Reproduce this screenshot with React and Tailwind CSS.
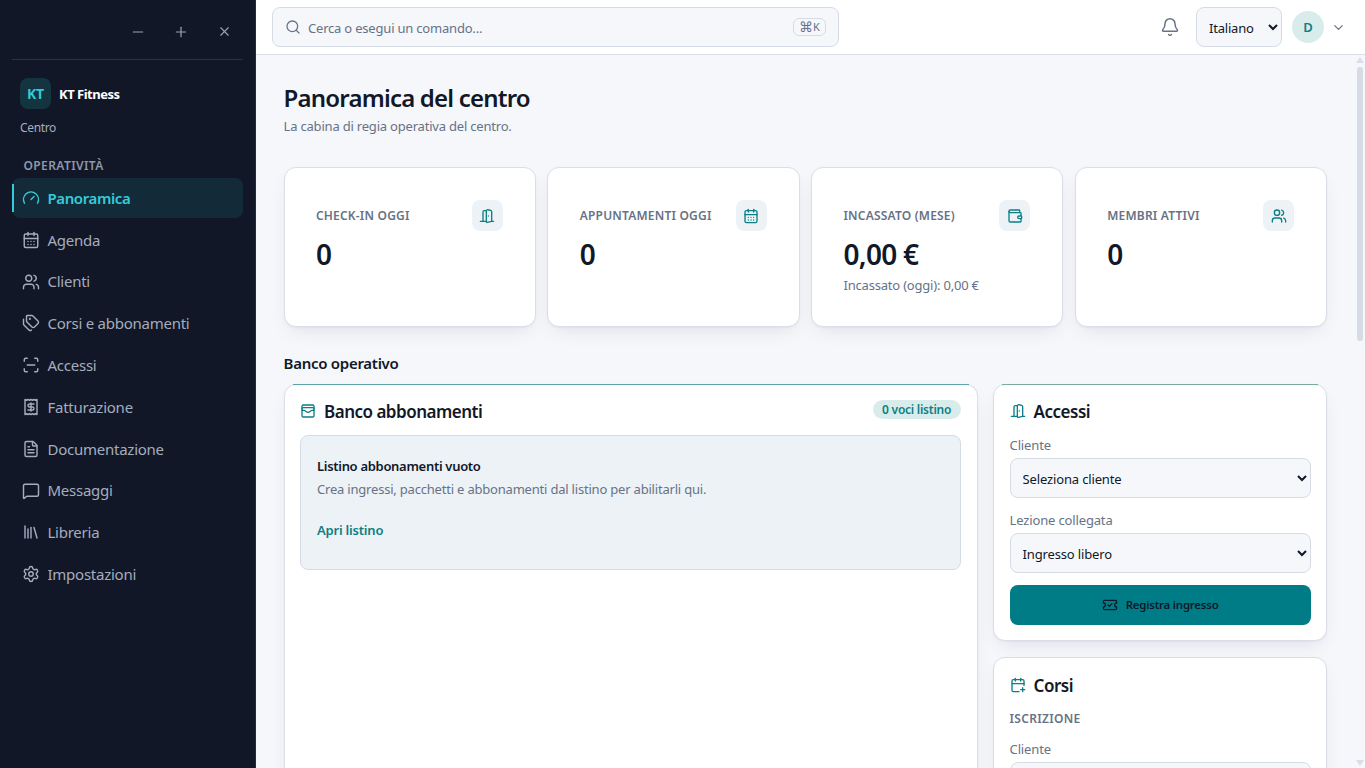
import React, { useState } from 'react';
import {
  Bell,
  CalendarDays,
  CalendarPlus,
  ChevronDown,
  DoorOpen,
  FileText,
  Gauge,
  Library,
  MessageSquare,
  Minus,
  Plus,
  Receipt,
  ScanLine,
  Search,
  Settings,
  Tags,
  TicketCheck,
  Users,
  Wallet,
  WalletCards,
  X
} from 'lucide-react';

const navItems = [
  { key: 'panoramica', label: 'Panoramica', icon: Gauge },
  { key: 'agenda', label: 'Agenda', icon: CalendarDays },
  { key: 'clienti', label: 'Clienti', icon: Users },
  { key: 'corsi', label: 'Corsi e abbonamenti', icon: Tags },
  { key: 'accessi', label: 'Accessi', icon: ScanLine },
  { key: 'fatturazione', label: 'Fatturazione', icon: Receipt },
  { key: 'documentazione', label: 'Documentazione', icon: FileText },
  { key: 'messaggi', label: 'Messaggi', icon: MessageSquare },
  { key: 'libreria', label: 'Libreria', icon: Library },
  { key: 'impostazioni', label: 'Impostazioni', icon: Settings }
];

const stats = [
  { label: 'CHECK-IN OGGI', value: '0', icon: DoorOpen },
  { label: 'APPUNTAMENTI OGGI', value: '0', icon: CalendarDays },
  { label: 'INCASSATO (MESE)', value: '0,00 €', hint: 'Incassato (oggi): 0,00 €', icon: Wallet },
  { label: 'MEMBRI ATTIVI', value: '0', icon: Users }
];

const cardClass = 'bg-white border border-[#d9deea] rounded-xl shadow-[0_1px_2px_rgba(15,23,42,0.04),0_8px_20px_-6px_rgba(15,23,42,0.10)]';

const Sidebar = () => {
  const [active, setActive] = useState('panoramica');

  return (
    <aside className="w-64 shrink-0 h-full bg-[#111727] border-r border-[#252b3b] px-3 text-[#a5adbd]">
      <div className="h-[60px] flex items-center justify-end gap-[27.5px] pr-[11px] pt-1 border-b border-[#2b3242] text-[#9aa3b4]">
        <Minus size={16} strokeWidth={1.8} />
        <Plus size={16} strokeWidth={1.8} className="-ml-px mr-px" />
        <X size={15} strokeWidth={1.8} />
      </div>
      <div className="flex items-center gap-2 mt-[18px] ml-2">
        <div className="w-[31px] h-[31px] rounded-lg bg-[#14343f] text-[#35cbd8] text-[14px] font-bold tracking-[-0.3px] flex items-center justify-center">KT</div>
        <span className="mt-[2px] text-[13px] font-bold text-white tracking-[-0.5px]">KT Fitness</span>
      </div>
      <div className="ml-2 mt-[10px] text-[12px] leading-[18px] tracking-[-0.35px]">Centro</div>
      <div className="ml-[11.5px] mt-5 text-[12px] leading-[18px] font-semibold tracking-[0.4px] text-[#8f98aa]">OPERATIVITÀ</div>
      <nav className="mt-[3px] flex flex-col gap-[1.8px]">
        {navItems.map((item) => {
          const Icon = item.icon;
          const isActive = active === item.key;
          return (
            <button
              key={item.key}
              onClick={() => setActive(item.key)}
              className={`relative w-[231px] h-10 flex items-center gap-[7.5px] px-[10px] rounded-lg text-[15px] ${
                isActive ? 'bg-[#132b39] text-[#35cbd8] font-semibold tracking-[-0.4px]' : 'tracking-[-0.25px]'
              }`}
            >
              {isActive && <span className="absolute left-0 top-[6px] w-[2px] h-7 bg-[#35cbd8]" />}
              <Icon size={18} strokeWidth={1.9} />
              {item.label}
            </button>
          );
        })}
      </nav>
    </aside>
  );
};

const Header = () => (
  <header className="h-[55px] shrink-0 bg-white border-b border-[#d9deea] flex items-center px-4">
    <div className="w-[567px] h-10 flex items-center bg-[#f5f7fb] border border-[#d5dce6] rounded-lg px-3 text-[#677286]">
      <Search size={16} strokeWidth={1.9} />
      <span className="ml-[7px] mt-[3px] text-[13px] tracking-[-0.2px]">Cerca o esegui un comando...</span>
      <kbd className="ml-auto w-[33px] h-[18px] border border-[#d5dce6] rounded-md font-['Noto_Sans','DejaVu_Sans',sans-serif] text-[11px] flex items-center justify-center">
        <span className="text-[14px] leading-none">⌘</span>K
      </kbd>
    </div>
    <div className="ml-auto flex items-center text-[#677286]">
      <Bell size={20} strokeWidth={1.75} />
      <select className="ml-4 w-[86px] h-10 bg-[#f5f7fb] border border-[#d5dce6] rounded-lg pl-2 pt-[2px] text-[13px] tracking-[-0.2px] text-[#111827]">
        <option>Italiano</option>
      </select>
      <div className="ml-[10px] w-8 h-8 pt-[2px] rounded-full bg-[#d9ecec] text-[#0b7f84] text-[13px] font-semibold flex items-center justify-center">D</div>
      <ChevronDown size={15} strokeWidth={2} className="ml-[7px] mr-[3px]" />
    </div>
  </header>
);

const StatCard = ({ stat }) => {
  const Icon = stat.icon;
  return (
    <div className={`h-40 pl-[31.4px] pr-8 pt-8 ${cardClass}`}>
      <div className="flex items-center justify-between">
        <span className="text-[12px] font-semibold tracking-[0.2px] text-[#677286]">{stat.label}</span>
        <span className="w-[31px] h-[31px] rounded-lg bg-[#edf2f7] text-[#0b7f84] flex items-center justify-center">
          <Icon size={16} strokeWidth={2} />
        </span>
      </div>
      <div className="mt-1 mb-[2px] text-[28px] leading-[38px] font-semibold tracking-[-0.7px] text-[#111827]">{stat.value}</div>
      {stat.hint && <div className="text-[13px] leading-5 tracking-[-0.2px] text-[#677286]">{stat.hint}</div>}
    </div>
  );
};

const Field = ({ label, value }) => (
  <label className="block">
    <span className="block text-[13px] leading-5 tracking-[-0.15px] text-[#677286]">{label}</span>
    <select className="mt-[3px] w-full h-10 bg-[#f5f7fb] border border-[#d5dce6] rounded-lg pl-2 pt-[2px] text-[13px] tracking-[-0.15px] text-[#111827]">
      <option>{value}</option>
    </select>
  </label>
);

const PanelTitle = ({ icon: Icon, children }) => (
  <h3 className="flex items-center gap-2 text-[17px] leading-6 font-semibold tracking-[-0.5px] text-[#111827]">
    <Icon size={16} strokeWidth={2} className="-mt-[2px] text-[#0b7f84]" />
    {children}
  </h3>
);

const App = () => {
  return (
    <div className="h-screen flex overflow-hidden bg-[#f5f7fb] font-['Noto_Sans',sans-serif]">
      <Sidebar />
      <div className="flex-1 min-w-0 flex flex-col">
        <Header />
        <div className="flex-1 min-h-0 flex overflow-hidden">
          <main className="w-[1099px] shrink-0 pl-[27.6px] pr-7 pt-[26px] overflow-hidden">
            <h1 className="text-[24px] leading-[34px] font-semibold tracking-[-0.8px] text-[#111827]">Panoramica del centro</h1>
            <p className="mt-px text-[13px] leading-5 tracking-[-0.2px] text-[#677286]">La cabina di regia operativa del centro.</p>

            <div className="mt-[31px] grid grid-cols-4 gap-[11.6px]">
              {stats.map((stat) => (
                <StatCard key={stat.label} stat={stat} />
              ))}
            </div>

            <h2 className="mt-6 text-[15px] leading-6 font-semibold tracking-[-0.28px] text-[#111827]">Banco operativo</h2>

            <div className="mt-[9px] flex items-start gap-[15px]">
              <section className={`relative w-[694px] h-[460px] pl-[15.4px] pr-4 pt-[15px] ${cardClass}`}>
                <span className="absolute inset-x-2 -top-px h-px bg-[#5fa5aa]" />
                <div className="flex items-start justify-between">
                  <PanelTitle icon={WalletCards}>Banco abbonamenti</PanelTitle>
                  <span className="w-[88px] h-[19px] rounded-full bg-[#d9ecec] text-[#0b7f84] text-[12px] font-semibold tracking-[-0.25px] flex items-center justify-center">0 voci listino</span>
                </div>
                <div className="mt-[11px] h-[135px] rounded-lg border border-[#d5dce6] bg-[#edf2f7] px-4 pt-5">
                  <div className="text-[13px] leading-5 font-semibold tracking-[-0.3px] text-[#111827]">Listino abbonamenti vuoto</div>
                  <div className="mt-[3px] text-[13px] leading-5 tracking-[-0.2px] text-[#677286]">Crea ingressi, pacchetti e abbonamenti dal listino per abilitarli qui.</div>
                  <button className="mt-[21px] text-[13px] leading-5 font-semibold tracking-[-0.2px] text-[#0b7f84]">Apri listino</button>
                </div>
              </section>

              <div className="w-[334px] shrink-0 flex flex-col gap-4">
                <section className={`relative h-[257px] pl-4 pr-[15px] pt-[15px] ${cardClass}`}>
                  <span className="absolute inset-x-2 -top-px h-px bg-[#7aab9f]" />
                  <PanelTitle icon={DoorOpen}>Accessi</PanelTitle>
                  <div className="mt-[11px] flex flex-col gap-3">
                    <Field label="Cliente" value="Seleziona cliente" />
                    <Field label="Lezione collegata" value="Ingresso libero" />
                    <button className="h-10 rounded-lg bg-[#007c87] text-[#111827] text-[11.5px] font-semibold tracking-[-0.25px] flex items-center justify-center gap-2">
                      <TicketCheck size={16} strokeWidth={1.9} />
                      Registra ingresso
                    </button>
                  </div>
                </section>
                <section className={`h-[257px] pl-4 pr-[15px] pt-4 ${cardClass}`}>
                  <PanelTitle icon={CalendarPlus}>Corsi</PanelTitle>
                  <div className="mt-3 mb-[11px] text-[12px] leading-[18px] font-semibold tracking-[0.3px] text-[#677286]">ISCRIZIONE</div>
                  <Field label="Cliente" value="Seleziona cliente" />
                </section>
              </div>
            </div>
          </main>
          {/* scrollbar */}
          <div className="flex-1 flex flex-col items-center pr-px pt-[2px] pb-[2px]">
            <span className="w-0 h-0 border-x-[4px] border-x-transparent border-b-[6px] border-b-[#d9dee8]" />
            <span className="mt-[4px] w-[6px] h-[274px] rounded-full bg-[#d5dce6]" />
            <span className="mt-auto w-0 h-0 border-x-[4px] border-x-transparent border-t-[6px] border-t-[#d9dee8]" />
          </div>
        </div>
      </div>
    </div>
  );
};

export default App;
